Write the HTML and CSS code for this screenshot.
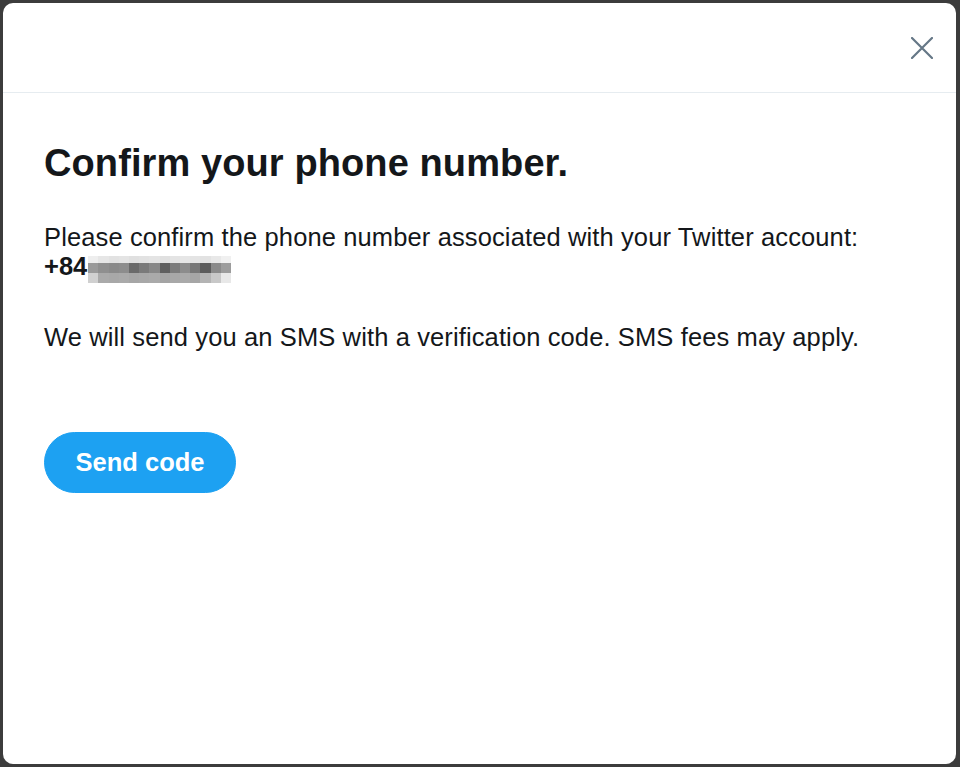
FILE: index.html
```html
<!DOCTYPE html>
<html lang="en">
<head>
<meta charset="utf-8">
<title>Confirm your phone number</title>
<link rel="stylesheet" href="styles.css">
</head>
<body>
<div class="modal">
  <div class="modal-header">
    <button class="close" aria-label="Close">
      <svg width="22" height="22" viewBox="0 0 22 22"><path d="M1 1 L21 21 M21 1 L1 21" stroke="#657786" stroke-width="2.2" stroke-linecap="round" fill="none"/></svg>
    </button>
  </div>
  <div class="modal-body">
    <h1 class="title">Confirm your phone number.</h1>
    <p class="text">Please confirm the phone number associated with your Twitter account:</p>
    <div class="phone"><strong>+84</strong><span class="blur"><span style="background:#eeeeee"></span><span style="background:#e6e6e6"></span><span style="background:#e2e2e2"></span><span style="background:#e4e4e4"></span><span style="background:#e0e0e0"></span><span style="background:#e2e2e2"></span><span style="background:#e4e4e4"></span><span style="background:#e0e0e0"></span><span style="background:#e4e4e4"></span><span style="background:#e6e6e6"></span><span style="background:#e4e4e4"></span><span style="background:#e2e2e2"></span><span style="background:#e8e8e8"></span><span style="background:#f0f0f0"></span><span style="background:#9a9a9a"></span><span style="background:#8f8f8f"></span><span style="background:#8a8a8a"></span><span style="background:#8d8d8d"></span><span style="background:#6a6a6a"></span><span style="background:#7a7a7a"></span><span style="background:#888888"></span><span style="background:#5e5e5e"></span><span style="background:#7c7c7c"></span><span style="background:#8c8c8c"></span><span style="background:#777777"></span><span style="background:#5c5c5c"></span><span style="background:#8a8a8a"></span><span style="background:#9c9c9c"></span><span style="background:#d0d0d0"></span><span style="background:#aaaaaa"></span><span style="background:#a8a8a8"></span><span style="background:#aaaaaa"></span><span style="background:#a6a6a6"></span><span style="background:#a8a8a8"></span><span style="background:#aaaaaa"></span><span style="background:#a4a4a4"></span><span style="background:#a8a8a8"></span><span style="background:#aaaaaa"></span><span style="background:#a6a6a6"></span><span style="background:#b4b4b4"></span><span style="background:#c8c8c8"></span><span style="background:#e8e8e8"></span></span></div>
    <p class="text text-sms">We will send you an SMS with a verification code. SMS fees may apply.</p>
    <button class="send">Send code</button>
  </div>
</div>
</body>
</html>
```

FILE: styles.css
```css
html, body {
  margin: 0;
  padding: 0;
  height: 100%;
}
body {
  background: #3c3c3c;
  font-family: "Liberation Sans", Arial, Helvetica, sans-serif;
  color: #14171a;
}
.modal {
  margin: 3px 4px 3px 3px;
  height: 761px;
  background: #ffffff;
  border-radius: 10px;
  overflow: hidden;
}
.modal-header {
  height: 89px;
  border-bottom: 1px solid #e6ecf0;
  display: flex;
  align-items: center;
  justify-content: flex-end;
  padding-right: 23px;
}
.close {
  border: 0;
  background: none;
  padding: 0;
  margin: 0;
  width: 22px;
  height: 22px;
  display: block;
  cursor: pointer;
}
.close svg {
  display: block;
}
.modal-body {
  padding: 48px 40px 0 41px;
}
.title {
  margin: 0;
  font-size: 38px;
  line-height: 44px;
  font-weight: 700;
  letter-spacing: 0.1px;
  color: #14171a;
}
.text {
  margin: 38px 0 0;
  font-size: 25.5px;
  line-height: 29px;
  letter-spacing: 0.12px;
  color: #14171a;
}
.phone {
  display: flex;
  align-items: flex-end;
  height: 29px;
  font-size: 25.5px;
  line-height: 29px;
}
.phone strong {
  font-weight: 700;
}
.blur {
  display: grid;
  grid-template-columns: repeat(14, 10.2px);
  grid-template-rows: 7px 10px 10px;
  margin-left: 1px;
  margin-bottom: -2px;
}
.blur span {
  display: block;
}
.text-sms {
  margin-top: 42px;
}
.send {
  box-sizing: border-box;
  margin-top: 80px;
  width: 192px;
  height: 61px;
  padding: 0;
  border: 1px solid #1da1f2;
  border-radius: 31px;
  background: #1da1f2;
  color: #ffffff;
  font-family: "Liberation Sans", Arial, Helvetica, sans-serif;
  font-size: 25.5px;
  font-weight: 700;
  white-space: nowrap;
  cursor: pointer;
  display: flex;
  align-items: center;
  justify-content: center;
}
```
